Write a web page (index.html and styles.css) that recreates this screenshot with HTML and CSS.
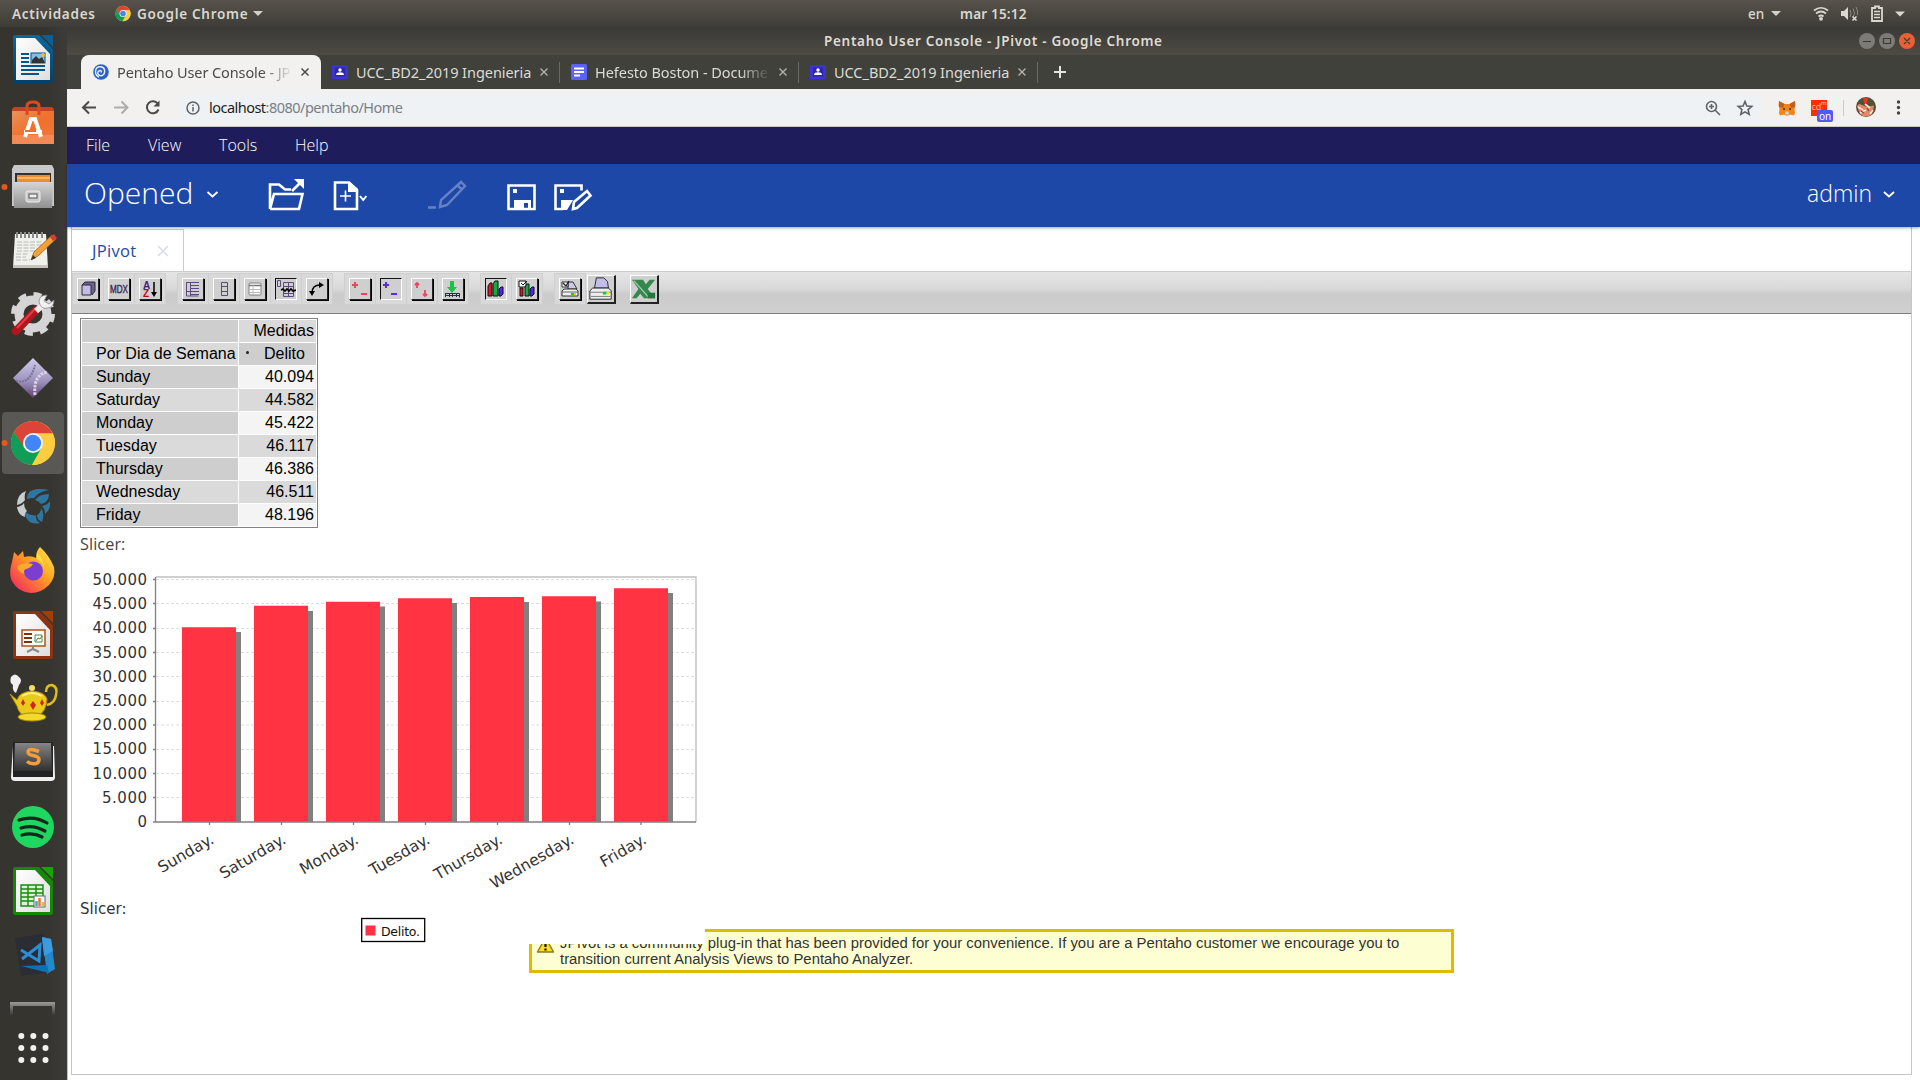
FILE: index.html
```html
<!DOCTYPE html>
<html lang="es">
<head>
<meta charset="utf-8">
<title>Pentaho User Console - JPivot</title>
<link rel="stylesheet" href="styles.css">
</head>
<body>
<svg class="defs" width="0" height="0">
  <defs>
    <symbol id="chrome-logo" viewBox="0 0 48 48">
      <circle cx="24" cy="24" r="23" fill="#ffcd40"/>
      <path d="M4 12.500A23 23 0 0 1 44.500 14H24L14 29z" fill="#db4437"/>
      <path d="M4 12.500A23 23 0 0 0 23 47L33 29.500 24 34 15 29z" fill="#0f9d58"/>
      <path d="M24 14h20.500A23 23 0 0 1 23 47l10-18z" fill="#ffcd40"/>
      <circle cx="24" cy="24" r="10.500" fill="#f5f5f5"/><circle cx="24" cy="24" r="8.500" fill="#4285f4"/>
    </symbol>
    <symbol id="classroom" viewBox="0 0 16 16">
      <rect width="16" height="14" y="1" fill="#3d34cf"/><rect x="3" y="3.500" width="10" height="9" fill="#2d27a5"/>
      <circle cx="8" cy="6" r="1.700" fill="#fff"/><path d="M4 11c0-2 2-2.700 4-2.700s4 .7 4 2.700z" fill="#fff"/>
    </symbol>
    <linearGradient id="lg-page" x1="0" y1="0" x2="1" y2="1"><stop offset="0" stop-color="#fff"/><stop offset="1" stop-color="#dedede"/></linearGradient>
    <linearGradient id="lg-writer" x1="0" y1="0" x2="0" y2="1"><stop offset="0" stop-color="#0369a3"/><stop offset="1" stop-color="#054068"/></linearGradient>
    <linearGradient id="lg-bag" x1="0" y1="0" x2="1" y2="1"><stop offset="0" stop-color="#e9925a"/><stop offset=".5" stop-color="#f0702c"/><stop offset="1" stop-color="#f07a40"/></linearGradient>
    <linearGradient id="lg-metal" x1="0" y1="0" x2="0" y2="1"><stop offset="0" stop-color="#d5d5d5"/><stop offset="1" stop-color="#909090"/></linearGradient>
    <linearGradient id="lg-diamond" x1="0" y1="0" x2="0" y2="1"><stop offset="0" stop-color="#cfcdea"/><stop offset=".6" stop-color="#9c8fbb"/><stop offset="1" stop-color="#5b4270"/></linearGradient>
    <linearGradient id="lg-fox" x1="1" y1="0" x2="0" y2="1"><stop offset="0" stop-color="#fff44f"/><stop offset=".45" stop-color="#ff9a1f"/><stop offset="1" stop-color="#f5156c"/></linearGradient>
    <linearGradient id="lg-key" x1="0" y1="0" x2="0" y2="1"><stop offset="0" stop-color="#858585"/><stop offset="1" stop-color="#303030"/></linearGradient>
    <linearGradient id="lg-fade" x1="0" y1="0" x2="0" y2="1"><stop offset="0" stop-color="#9b9a96"/><stop offset="1" stop-color="#3b3a36"/></linearGradient>
  </defs>
</svg>

<header class="topbar">
  <span class="activities">Actividades</span>
  <svg class="app-logo" width="16" height="17"><use href="#chrome-logo"/></svg>
  <span class="app-name">Google Chrome</span>
  <i class="caret"></i>
  <span class="clock">mar 15:12</span>
  <span class="lang">en</span><i class="caret"></i>
  <svg class="tray" width="96" height="20" viewBox="0 0 96 20" fill="none" stroke="#dad7d0">
    <path d="M1 6.500q7-5.500 14 0M3 9.500q5-4 10 0M5.500 12.500q2.500-2 5 0" stroke-width="1.700"/><circle cx="8" cy="14.800" r="1.900" fill="#dad7d0" stroke="none"/>
    <path d="M28 7h3l4-4v13l-4-4h-3z" fill="#dad7d0" stroke="none"/><path d="M37 6q2 3.500 0 7M40 4.500q3 5 0 9M43 3q2 3 1.500 8" stroke="#8c8a83"/><path d="M39.500 12.500l4 4m0-4l-4 4" stroke-width="1.700"/>
    <path d="M59 4h3V2.500h4V4h3v13H59z" stroke-width="1.800"/><path d="M61 7.500h6M61 10.500h6M61 13.500h6" stroke-width="1.600"/>
    <path d="M82 7.500h10l-5 5z" fill="#dad7d0" stroke="none"/>
  </svg>
</header>

<div class="desktop">
<nav class="dock">
  <svg viewBox="0 27 67 64"><path d="M15 35h24l14 14v32q0 2-2 2H15q-2 0-2-2V37q0-2 2-2z" fill="url(#lg-writer)"/><path d="M41 35h12v12z" fill="#0b5f96"/><path d="M16 38h19l15 16v26H16z" fill="url(#lg-page)"/><path d="M21 54h8M21 58h8M21 62h8M21 66h24M21 70h24M21 74h18" stroke="#04568a" stroke-width="2"/><rect x="31" y="53" width="14" height="10" fill="#80bfe8" stroke="#064f80"/><path d="M32 63v-3l4-4 3 3 3-2 3 6z" fill="#333"/><circle cx="43" cy="55" r="2" fill="#f1bd36"/></svg>
  <svg viewBox="0 91 67 64"><path d="M12 109l2-2h38l2 2v4H12z" fill="#c2451f"/><path d="M12 111h42v33H12z" fill="url(#lg-bag)"/><path d="M12 135h42v9H12z" fill="#f38a55"/><path d="M27 115v-9q0-4 6-4t6 4v9" fill="none" stroke="#db4a1c" stroke-width="3"/><path d="M25 137l6-18h4l6 18M24 132h18" fill="none" stroke="#fff" stroke-width="4"/><path d="M25 131h11" stroke="#ee6c2d" stroke-width="2"/></svg>
  <svg viewBox="0 155 67 64"><circle cx="4.500" cy="187" r="3" fill="#e95420"/><path d="M14 165h38l2 4v37H12v-37z" fill="#c8c8c8"/><path d="M15 173h36v10H15z" fill="#3a3026"/><path d="M17 175h33v7H17z" fill="#f08c30"/><path d="M17 178h33" stroke="#ffe0a0"/><path d="M13 182h40l-1 26H14z" fill="url(#lg-metal)"/><rect x="26" y="191" width="14" height="11" rx="2" fill="#c9c9c9" stroke="#eee"/><rect x="29" y="194" width="8" height="4" fill="#eee" stroke="#555"/></svg>
  <svg viewBox="0 219 67 64"><path d="M15 234h31l2 34H13z" fill="#f1f1ec"/><path d="M13 265h35v3H13z" fill="#c5c5bd"/><path d="M17 232v6m4-6v6m4-6v6m4-6v6m4-6v6m4-6v6m5-6v6" stroke="#8b8b8b" stroke-width="2"/><path d="M17 242h26M17 245h25M17 248h20M17 251h22M16 254h12M16 257h10M16 260h14" stroke="#b8b8b8" stroke-dasharray="5 1.500"/><path d="M31 260l3-8 18-17 4 4-18 17z" fill="#f1a13a" stroke="#a35f1c" stroke-width=".8"/><path d="M50 237l4-3 3 4-4 3z" fill="#d93b3b"/><path d="M31 260l2-5 3 3z" fill="#333"/></svg>
  <svg viewBox="0 283 67 64"><circle cx="33" cy="314" r="14" fill="none" stroke="#d5d5d5" stroke-width="9"/><circle cx="33" cy="314" r="19.500" fill="none" stroke="#d5d5d5" stroke-width="5" stroke-dasharray="8 7.300"/><path d="M16 331l20-21" stroke="#b4141d" stroke-width="8" stroke-linecap="round"/><path d="M17 328l18-19" stroke="#e04149" stroke-width="2"/><path d="M36 311l7-6" stroke="#eee" stroke-width="6"/><path d="M47 295q-8 0-8 7 2 8 9 6 6-1 6-8l-5 4-5-3z" fill="#f0f0f0" stroke="#888" stroke-width=".8"/></svg>
  <svg viewBox="0 347 67 64"><path d="M33 358l20 20-20 20-20-20z" fill="url(#lg-diamond)"/><path d="M16 381q14 4 19-16" stroke="#77709b" stroke-width="2" fill="none" stroke-dasharray="2 1"/><path d="M35 395q-2-21 13-23" stroke="#ddd3e8" stroke-width="3" fill="none" stroke-dasharray="2.500 1.200"/></svg>
  <svg viewBox="0 411 67 64"><rect x="2" y="412" width="62" height="62" rx="4" fill="#595854"/><circle cx="4.500" cy="443" r="3" fill="#e95420"/><svg x="10" y="420" width="46" height="46"><use href="#chrome-logo"/></svg></svg>
  <svg viewBox="0 475 67 64"><g fill="#2e769f"><path d="M27 499q0-10 12-10 6 0 10 1-11 2-15 8-4 0-7 1z"/><path d="M35 500q4-6 14-6 0 8-8 10-2-3-6-4z"/><path d="M42 506q6-1 8-5 1 9-5 13 0-5-3-8z"/><path d="M41 508q4 6 1 14-5-2-5-7 4-2 4-7z"/><path d="M33 515q3 1 3 0-1 5 4 8-9 2-13-4-3-4-2-8 3 4 8 4z"/></g><path d="M26 491q-9 3-9 14 5-1 8-5-1-5 1-9zM17 507q5-1 7-4 0 5 3 8-3 2-2 6-7-2-8-10z" fill="#c9cdd0"/></svg>
  <svg viewBox="0 539 67 64"><path d="M12 562l2-10 4 4 5-5 1 6q7-2 12 1 0-7 4-11 9 8 14 20 2 10-5 18-8 8-18 8-14-1-20-14-2-8 1-17z" fill="url(#lg-fox)"/><circle cx="33.500" cy="571" r="9.500" fill="#7a3ed1"/><path d="M17 566q8-4 16-2-2 4-7 5-3 1-2 5-6-2-7-8z" fill="#ffa932"/><path d="M37 559q7 4 7 10 0-10-7-16z" fill="#ffe443"/></svg>
  <svg viewBox="0 603 67 64"><path d="M15 611h24l14 14v32q0 2-2 2H15q-2 0-2-2V613q0-2 2-2z" fill="#8b3312"/><path d="M41 611h12v12z" fill="#a33e03"/><path d="M16 614h19l15 16v26H16z" fill="url(#lg-page)"/><rect x="22" y="630" width="23" height="16" fill="#fff" stroke="#b5501b" stroke-width="1.500"/><path d="M24 634h8m-8 4h8m-8 4h8" stroke="#7d3110" stroke-width="2"/><path d="M35 635h7v7h-7zM36 641l2-3 2 1 2-3" fill="none" stroke="#4b8a3e"/><path d="M33 646v3l-6 3m6-3l6 3" stroke="#888" stroke-width="2" fill="none"/></svg>
  <svg viewBox="0 667 67 64"><path d="M11 677q4-5 8 0 4 3 0 8l-3 8q-4-2-3-8-4-3-2-8z" fill="#f0f0f0"/><path d="M10 694l7 6q2-8 15-9 13 1 15 8-1 14-10 17v4H25v-4q-6-2-8-10z" fill="#eacb19" stroke="#b38c08"/><path d="M46 692q0-7 6-7 6 2 4 10-1 8-9 10" fill="none" stroke="#e1bd18" stroke-width="2.500"/><circle cx="32" cy="688" r="3" fill="#f5e060"/><ellipse cx="32" cy="717" rx="14" ry="4" fill="#f3d92b" stroke="#a88706"/><path d="M23 699l2 4-2 3-2-3zM33 701l3 4-3 5-3-5zM42 699l2 4-2 3-2-3z" fill="#d6211e"/><path d="M22 696q10-6 20 0" stroke="#fff27e" fill="none" stroke-width="2"/></svg>
  <svg viewBox="0 731 67 64"><path d="M13 746h41l1 31q0 4-4 4H15q-4 0-4-4z" fill="#efefef"/><path d="M15 742h36q2 0 2 3v32H13v-32q0-3 2-3z" fill="#222"/><path d="M15 743h36l1 28H14z" fill="url(#lg-key)"/><path d="M39 751.500q-11-4-11 .5c0 5 11 2 11 7.500 0 6-9 4.500-12 2" fill="none" stroke="#f89b3a" stroke-width="3.500"/></svg>
  <svg viewBox="0 795 67 64"><circle cx="33" cy="827" r="21" fill="#1fd760"/><path d="M19 820q15-5 28 3M21 828q12-4 24 3M22 835q11-3 20 2" fill="none" stroke="#14271b" stroke-width="3.200" stroke-linecap="round"/></svg>
  <svg viewBox="0 859 67 64"><path d="M15 867h24l14 14v32q0 2-2 2H15q-2 0-2-2V869q0-2 2-2z" fill="#148706"/><path d="M41 867h12v12z" fill="#18a303"/><path d="M16 870h19l15 16v26H16z" fill="url(#lg-page)"/><path d="M21 885h22v21H21zM21 889h22M21 893h22M21 897h22M21 901h22M28 885v21M36 885v21" fill="#d9f5d4" stroke="#198a10" stroke-width="1.400"/><rect x="34" y="896" width="11" height="11" fill="#fff" stroke="#666"/><path d="M36.500 906v-5" stroke="#3ba7e0" stroke-width="2.500"/><path d="M39.500 906v-8" stroke="#e8772a" stroke-width="2.500"/><path d="M43 906v-4" stroke="#e7b93b" stroke-width="2.500"/></svg>
  <svg viewBox="0 923 67 64"><path d="M15 938l28-4 9 38-31 4z" fill="#2b2d35"/><path d="M42 937l9 2 4 30-8 5z" fill="#2489ca"/><path d="M42 937l9 2 2 12-9 5z" fill="#3c9be0"/><path d="M21 966l26-1 2 8z" fill="#1070b3"/><path d="M21 950l18 11 1-16-18 14" fill="none" stroke="#2b8dd3" stroke-width="3"/></svg>
  <svg class="cut" viewBox="0 987 67 30"><path d="M10 1002h45v13h-3v-9H13v9h-3z" fill="url(#lg-fade)"/></svg>
  <svg class="apps" viewBox="0 1017 67 63" fill="#f2f1ee"><g id="dots"><circle cx="21.300" cy="1036" r="3"/><circle cx="33.300" cy="1036" r="3"/><circle cx="45.500" cy="1036" r="3"/></g><use href="#dots" y="12"/><use href="#dots" y="24"/></svg>
</nav>

<main class="window">
  <div class="titlebar"><span class="wtitle">Pentaho User Console - JPivot - Google Chrome</span>
    <svg class="wbtns" width="60" height="20" viewBox="0 0 60 20"><circle cx="10" cy="10" r="8" fill="#7d7b75"/><circle cx="30" cy="10" r="8" fill="#7d7b75"/><circle cx="50" cy="10" r="8" fill="#ea5f34"/><path d="M6 10.500h8M26.500 7.500h7v5h-7zM47 7l6 6m0-6l-6 6" stroke="#3b3a36" stroke-width="1.200" fill="none"/></svg>
  </div>
  <div class="tabs">
    <div class="tab active"><svg class="fav" width="16" height="18" viewBox="0 0 16 18" fill="none"><circle cx="8" cy="9" r="7.800" fill="#2b62c4"/><path d="M8 9.500q1-2-1-2-3 1-2 3.500 3 3.500 6 0 2-5-2-7-6-1.500-6.500 4.500 0 4 3.500 5.500" stroke="#e9f0fc" stroke-width="1.400"/></svg><span class="tt t1">Pentaho User Console - JP</span><svg class="x" width="10" height="10"><path d="M1.500 1.500l7 7m0-7l-7 7" stroke="#4a4a46" stroke-width="1.500"/></svg></div>
    <div class="tab"><svg class="fav" width="16" height="16"><use href="#classroom"/></svg><span class="tt t2">UCC_BD2_2019 Ingenieria</span><svg class="x" width="10" height="10"><path d="M1.500 1.500l7 7m0-7l-7 7" stroke="#b3b2ac" stroke-width="1.400"/></svg></div>
    <div class="tab sep"><svg class="fav" width="16" height="16"><rect width="16" height="16" rx="1.500" fill="#5a63f3"/><path d="M3 4.500h10M3 8h10M3 11.500h6" stroke="#fff" stroke-width="1.800"/></svg><span class="tt t3">Hefesto Boston - Docume</span><svg class="x" width="10" height="10"><path d="M1.500 1.500l7 7m0-7l-7 7" stroke="#b3b2ac" stroke-width="1.400"/></svg></div>
    <div class="tab sep"><svg class="fav" width="16" height="16"><use href="#classroom"/></svg><span class="tt t2">UCC_BD2_2019 Ingenieria</span><svg class="x" width="10" height="10"><path d="M1.500 1.500l7 7m0-7l-7 7" stroke="#b3b2ac" stroke-width="1.400"/></svg></div>
    <div class="newtab"><svg width="14" height="14"><path d="M7 1v12M1 7h12" stroke="#e6e5e1" stroke-width="2"/></svg></div>
  </div>
  <div class="navbar">
    <svg width="110" height="36" viewBox="67 90 110 36" fill="none" stroke-width="2"><path d="M96 107.500H83.500M89 101.500l-6 6 6 6" stroke="#4a4a4a"/><path d="M114 107.500h13M121.500 101.500l6 6-6 6" stroke="#aeadab"/><path d="M158 104a6 6 0 1 0 .5 5.500" stroke="#4a4a4a"/><path d="M159.500 100.500v6h-6z" fill="#4a4a4a"/></svg>
    <div class="omni">
      <svg width="14" height="14" fill="none" stroke="#5f6368" stroke-width="1.500"><circle cx="7" cy="7" r="6"/><path d="M7 6v4.500M7 3.500v1.500"/></svg>
      <span class="url"><b>localhost</b>:8080/pentaho/Home</span>
      <svg class="omni-r" width="54" height="20" viewBox="1702 98 54 20" fill="none" stroke="#5f6368" stroke-width="1.600"><circle cx="1711.500" cy="106.500" r="5"/><path d="M1715 110l5 5M1709 106.500h5M1711.500 104v5"/><path d="M1745 101.500l1.900 4.500 4.900.4-3.700 3.200 1.100 4.800-4.200-2.500-4.200 2.500 1.100-4.800-3.700-3.200 4.900-.4z"/></svg>
    </div>
    <svg width="157" height="36" viewBox="1763 90 157 36"><path d="M1779 101l5.500 3h5l5.500-3 .5 4-1 4 .5 4-1 2.500-4-1-1.500 1h-3l-1.500-1-4 1-1-2.500.5-4-1-4z" fill="#f0851b"/><path d="M1785.500 111.500h3l.5 3h-4z" fill="#d9cfc6"/><path d="M1779 101l5.500 3-1.500 4-4-1zM1795 101l-5.500 3 1.500 4 4-1z" fill="#bd6020"/><path d="M1783 109h2m4 0h2" stroke="#333" stroke-width="1.300"/><rect x="1811" y="100" width="16" height="16" fill="#fb3007"/><text x="1811.500" y="110" font-family="Noto Sans" font-size="9" fill="#ffae91">cd</text><text x="1821" y="105" font-family="Noto Sans" font-size="6" fill="#ffd5c6">m</text><rect x="1817" y="110" width="16" height="12" rx="2" fill="#5459f2"/><text x="1819" y="120" font-family="Noto Sans" font-size="10" fill="#fff">on</text><path d="M1843.500 100v16" stroke="#c9c9c7"/><circle cx="1866" cy="107" r="10" fill="#5c4b38"/><path d="M1857 106q8-8 17 0l-2 8q-6 5-12 0z" fill="#e0886c"/><path d="M1857 103q4-5 9-2l6-1 3 5-8 2z" fill="#4b5636"/><path d="M1863 98h5l-1 5h-3z" fill="#e8381c"/><path d="M1858 107l5 3m2-6l5 4m-10 5l6-3m4 4l3-4" stroke="#fbe3cc" stroke-width="1.700"/><path d="M1861 111l3 2m3-5l2 3" stroke="#8e3f2c" stroke-width="1.200"/><circle cx="1898.500" cy="102" r="1.700" fill="#454545"/><circle cx="1898.500" cy="107.500" r="1.700" fill="#454545"/><circle cx="1898.500" cy="113" r="1.700" fill="#454545"/></svg>
  </div>

  <div class="menubar"><span class="m1">File</span><span class="m2">View</span><span class="m3">Tools</span><span>Help</span></div>
  <div class="bluebar">
    <span class="opened">Opened</span>
    <svg width="400" height="63" viewBox="200 164 400 63" fill="none" stroke="#fff" stroke-width="2.600">
      <path d="M207.500 192l5 4.500 5-4.500" stroke-width="1.800"/>
      <path d="M270 209v-24.500h9l6 5h6M270 209h29l3.500-15H274l-4 15M292 191l9-9"/><path d="M294 179h10v10z" fill="#fff" stroke="none"/>
      <path d="M335 182.500h14l8 7.500v19h-22z"/><path d="M348 182h2l8 7v3h-10z" fill="#fff" stroke="none"/><path d="M345.500 190.500v11M340 196h11" stroke-width="1.600"/><path d="M360 196l3.200 4 3.200-4" stroke-width="2"/>
      <g stroke="#6681c5" stroke-width="2.400"><path d="M428 207.500h8M440 207l1-7 20-18 4 4-18 19zM457 185l5 4.500"/></g>
      <path d="M508.500 185.500h26v23.500h-26z"/><path d="M514 200h17v9h-3v-6h-4v6h-10zM513 189h4v4h-4z" fill="#fff" stroke="none"/>
      <path d="M563 209h-7.500v-23.500h26v5"/><path d="M573 209l1-7 13-11 3.500 4.500L577 208z"/><path d="M560 189h4v4h-4zM561 200h12l-6 10h-6z" fill="#fff" stroke="none"/>
    </svg>
    <span class="admin">admin</span>
    <svg class="achev" width="14" height="10"><path d="M2 2l5 4.500L12 2" stroke="#fff" stroke-width="1.800" fill="none"/></svg>
  </div>

  <div class="workspace">
    <div class="panel">
      <div class="ptabs"><div class="ptab"><span>JPivot</span><svg width="12" height="12"><path d="M1 1l10 10m0-10L1 11" stroke="#d5daee" stroke-width="1.500"/></svg></div></div>
      <div class="toolbar">
        <i class="tb"><svg viewBox="0 0 20 20"><path d="M4 6l3-3h10v9l-3 4" fill="#6a628a" stroke="#2e2a3c"/><path d="M4 6h9v10H4z" fill="#c4bce8" stroke="#2e2a3c"/></svg></i>
        <i class="tb"><svg viewBox="0 0 20 20"><text x="1" y="14" textLength="18" lengthAdjust="spacingAndGlyphs" font-size="11" font-family="Liberation Sans" fill="#3b2452" stroke="#3b2452" stroke-width=".4">MDX</text></svg></i>
        <i class="tb"><svg viewBox="0 0 20 20" font-family="Liberation Sans" font-weight="bold" font-size="10"><text x="3" y="9.500" fill="#41217c">A</text><text x="3" y="18" fill="#b50d1d">Z</text><path d="M14 3v12" stroke="#000" stroke-width="1.500"/><path d="M11 13h6l-3 5z"/></svg></i>
        <i class="tb g"><svg viewBox="0 0 20 20" stroke="#5b4a7d" fill="none"><path d="M3 3.500h13M7 6.500h9M7 9.500h9M3 12.500h13M7 15.500h9M3.500 3v14h12M7.500 3v14"/></svg></i>
        <i class="tb"><svg viewBox="0 0 20 20" stroke="#5b4a7d" fill="none"><path d="M7.500 3.500h6v13h-6zM7 7.500h6M7 12.500h6"/></svg></i>
        <i class="tb"><svg viewBox="0 0 20 20"><rect x="4" y="4" width="12" height="12" rx="1" fill="#fff" stroke="#827f84"/><path d="M4 6.500h12" stroke="#777" stroke-width="1.500"/><path d="M4 10.500h12M4 13.500h12M8 6v10" stroke="#bbb"/></svg></i>
        <i class="tb in"><svg viewBox="0 0 20 20" stroke="#5b4a7d" fill="none"><path d="M1.500 1.500h3v6h-3zM7.500 3.500h10v14h-10zM7 7.500h11M7 14.500h11M12.500 3v15"/><path d="M5 11l2-1 2 2 2-2 2 2 2-2 2 2 3-1" stroke="#000" stroke-width="1.700"/></svg></i>
        <i class="tb"><svg viewBox="0 0 20 20"><path d="M5 14q0-8 8-8" fill="none" stroke="#000" stroke-width="1.500"/><path d="M12 3l5 3-5 3zM2 12h6l-3 5z"/></svg></i>
        <i class="tb g"><svg viewBox="0 0 20 20" stroke="#ee4459" stroke-width="2"><path d="M2 6h6M5 3v6M11 15h6"/></svg></i>
        <i class="tb in"><svg viewBox="0 0 20 20" stroke="#5a2fe0" stroke-width="2"><path d="M2 6h6M5 3v6M10 15h6"/></svg></i>
        <i class="tb"><svg viewBox="0 0 20 20" stroke="#ee4459" stroke-width="1.800" fill="none"><path d="M5 9V4M3 6l2-2 2 2M13 11v6M11 15l2 2 2-2"/></svg></i>
        <i class="tb"><svg viewBox="0 0 20 20"><path d="M7 2h4v6h3l-5 6-5-6h3z" fill="#18c541"/><path d="M2.500 14.500h14v4M2.500 14v4M6.500 14v4m3-4v4m4-4v4M2 16.500h14" stroke="#234" fill="none"/></svg></i>
        <i class="tb g in"><svg viewBox="0 0 20 20" stroke="#111"><path d="M2 7l2-3h2v13H2z" fill="#e01526"/><path d="M7 5l2-3h3v15H7z" fill="#11ad3d"/><path d="M13 10l2-2h2v7l-2 2h-2z" fill="#5423ee"/></svg></i>
        <i class="tb"><svg viewBox="0 0 20 20" stroke="#111"><path d="M2 2h7v6H2z" fill="#fff"/><path d="M4 4l2 2 4-4" fill="none"/><path d="M3 9h3v8H3z" fill="#e01526"/><path d="M8 8l2-3h2v12H8z" fill="#11ad3d"/><path d="M13 10l2-2h2v7l-2 2h-2z" fill="#5423ee"/></svg></i>
        <i class="tb g"><svg viewBox="0 0 20 20" stroke="#222" stroke-width=".9"><path d="M8 10V3h5l4 7z" fill="#cfc8ed"/><path d="M2 3h6v5H2z" fill="#fff"/><path d="M3 4l3 3 3-5" fill="none" stroke-width="1.300"/><path d="M2 12l2-2h12l2 2v5H2z" fill="#eee"/><path d="M2 13h16" stroke="#555"/><path d="M11 15h3" stroke="#11cc41" stroke-width="2"/><path d="M14 15h2" stroke="#f4c51a" stroke-width="2"/></svg></i>
        <i class="tb big"><svg viewBox="0 0 28 28" stroke="#222"><path d="M7 13l2-11h8l4 4 1 7z" fill="#c3bdea"/><path d="M2 16l3-3h17l3 3v9H2z" fill="#eee"/><path d="M2 17.500h23M3 22h21" stroke="#777"/><path d="M16 18.500h4" stroke="#11cc41" stroke-width="3"/><path d="M20 18.500h3" stroke="#f4e51a" stroke-width="3"/></svg></i>
        <i class="tb big xl"><svg viewBox="0 0 28 28"><path d="M1 4h12l3 5 4-5h6l-8 10 8 10H14l-4-5-4 5H1l7-10z" fill="#35884d"/><path d="M3 5l16 18" stroke="#a7c9ae" stroke-width="1.500"/><path d="M18 18h8v6h-8z" fill="#2b7540"/></svg></i>
      </div>

      <div class="content">
        <table class="pivot">
          <tr><th></th><th class="r b">Medidas</th></tr>
          <tr><th class="b">Por Dia de Semana</th><th class="m"><i></i>Delito</th></tr>
          <tr><th>Sunday</th><td>40.094</td></tr>
          <tr><th class="b">Saturday</th><td class="b">44.582</td></tr>
          <tr><th>Monday</th><td>45.422</td></tr>
          <tr><th class="b">Tuesday</th><td class="b">46.117</td></tr>
          <tr><th>Thursday</th><td>46.386</td></tr>
          <tr><th class="b">Wednesday</th><td class="b">46.511</td></tr>
          <tr><th>Friday</th><td>48.196</td></tr>
        </table>
        <p class="slicer">Slicer:</p>
        <svg class="chart" width="625" height="375" viewBox="80 569 625 375" font-family="DejaVu Sans" font-size="15" fill="#333">
          <rect x="80" y="569" width="625" height="375" fill="#fff"/>
          <g stroke="#dedede" stroke-width="1" stroke-dasharray="3 2"><path d="M156 579.500h539M156 603.500h539M156 628.500h539M156 652.500h539M156 676.500h539M156 701.500h539M156 725h539M156 749.500h539M156 773.500h539M156 797.500h539"/></g>
          <g fill="#808080"><path d="M187 632h54v190h-54zM259 611h54v211h-54zM331 606.500h54V822h-54zM403 603h54v219h-54zM475 602h54v220h-54zM547 601.500h54V822h-54zM619 593h54v229h-54z"/></g>
          <g fill="#ff3341"><path d="M182 627.300h54V822h-54zM254 605.700h54V822h-54zM326 601.700h54V822h-54zM398 598.300h54V822h-54zM470 597h54v225h-54zM542 596.300h54V822h-54zM614 588.200h54V822h-54z"/></g>
          <path d="M156 577h540v245" fill="none" stroke="#c0c0c0" stroke-width="1.400"/>
          <path d="M155.500 577v245H696M153 579.500h2M153 603.500h2M153 628.500h2M153 652.500h2M153 676.500h2M153 701.500h2M153 725h2M153 749.500h2M153 773.500h2M153 797.500h2M153 822h2M209.500 822v3M281.500 822v3M353.500 822v3M425.500 822v3M497.500 822v3M569.500 822v3M641 822v3" fill="none" stroke="#808080" stroke-width="1.300"/>
          <g text-anchor="end"><text x="147" y="585" textLength="54.500">50.000</text><text x="147" y="609" textLength="54.500">45.000</text><text x="147" y="633" textLength="54.500">40.000</text><text x="147" y="657.500" textLength="54.500">35.000</text><text x="147" y="681.500" textLength="54.500">30.000</text><text x="147" y="705.500" textLength="54.500">25.000</text><text x="147" y="730" textLength="54.500">20.000</text><text x="147" y="754" textLength="54.500">15.000</text><text x="147" y="778.500" textLength="54.500">10.000</text><text x="147" y="802.500" textLength="45">5.000</text><text x="147" y="826.500">0</text>
          <g font-size="15.700"><text transform="translate(215 842.500) rotate(-30)">Sunday.</text><text transform="translate(287 842.500) rotate(-30)">Saturday.</text><text transform="translate(359.500 842.500) rotate(-30)">Monday.</text><text transform="translate(431 842.500) rotate(-30)">Tuesday.</text><text transform="translate(503.500 842.500) rotate(-30)">Thursday.</text><text transform="translate(575 842.500) rotate(-30)">Wednesday.</text><text transform="translate(647.500 842.500) rotate(-30)">Friday.</text></g></g>
          <text x="80" y="914" textLength="46.500">Slicer:</text>
          <rect x="361.700" y="918.500" width="63" height="23" fill="#fff" stroke="#000" stroke-width="1.300"/><rect x="365.500" y="925.500" width="10" height="10" fill="#ff3341"/>
          <text x="381" y="935.500" font-size="12.500" textLength="39" fill="#111">Delito.</text>
        </svg>
        <div class="warn"><svg width="19" height="18" viewBox="0 0 19 18"><path d="M9.500 1.500l8 14.500H1.500z" fill="#fbdf27" stroke="#8f7a25" stroke-width="1.500" stroke-linejoin="round"/><path d="M9.500 5v6M9.500 12.500v2" stroke="#111" stroke-width="2.200"/></svg><p>JPivot is a community plug-in that has been provided for your convenience. If you are a Pentaho customer we encourage you to transition current Analysis Views to Pentaho Analyzer.</p></div>
      </div>
    </div>
  </div>
</main>
</div>
</body>
</html>
```
FILE: styles.css
```css
* { box-sizing: border-box; }
html, body { margin: 0; height: 1080px; overflow: hidden; background: #35342f; font-family: "Noto Sans", sans-serif; }
body { display: flex; flex-direction: column; }
svg { display: block; flex: none; }
.defs { position: absolute; }
span { white-space: nowrap; }

.topbar { height: 27px; flex: none; display: flex; align-items: center; background: linear-gradient(#57534b, #3e3c37); color: #dad7d0; font-size: 13.500px; font-weight: 600; padding-left: 12px; }
.activities { width: 103px; letter-spacing: .72px; }
.app-logo { margin-right: 6px; }
.app-name { width: 116px; letter-spacing: .7px; }
.caret { border: 5px solid transparent; border-top-color: #d3d0ca; border-bottom: 0; }
.clock { margin-left: 697px; width: 788px; letter-spacing: .2px; }
.lang { width: 23px; font-weight: 500; }
.tray { margin-left: 32px; }

.desktop { flex: 1; display: flex; min-height: 0; }
.dock { width: 67px; flex: none; background: linear-gradient(90deg, #35342f 70%, #3d3b37); }
.dock svg { width: 67px; height: 64px; }
.dock svg svg { width: 46px; height: 46px; }
.dock .cut { height: 30px; }
.dock .apps { height: 63px; }

.window { flex: 1; display: flex; flex-direction: column; background: #fff; min-width: 0; }
.titlebar { height: 28px; flex: none; background: linear-gradient(#3a3935, #4e4b44); display: flex; align-items: center; justify-content: flex-end; color: #dedbd4; font-size: 13.500px; font-weight: 600; }
.wtitle { width: 341px; margin-right: 692px; letter-spacing: .7px; }
.wbtns { margin-right: 3px; }

.tabs { height: 34px; flex: none; background: #41413c; display: flex; padding-left: 14px; }
.tab { width: 239px; display: flex; align-items: center; padding: 0 0 1px 12px; color: #dcdbd5; font-size: 14.500px; letter-spacing: -.05px; }
.tab.active { width: 240px; margin-right: -1px; background: #f2f1f0; color: #4b4a46; border-radius: 8px 8px 0 0; }
.fav { margin-right: 8px; }
.tt { width: 176px; }
.t1 { letter-spacing: -.1px; }
.t1, .t3 { -webkit-mask-image: linear-gradient(90deg, #000 82%, transparent); mask-image: linear-gradient(90deg, #000 82%, transparent); }
.x { margin-left: 7px; }
.sep { background: linear-gradient(#6b6a65, #6b6a65) 0 50% / 1px 21px no-repeat; }
.newtab { display: flex; align-items: center; padding-left: 16px; background: linear-gradient(#6b6a65, #6b6a65) 0 50% / 1px 21px no-repeat; }

.navbar { height: 38px; flex: none; background: #f2f1f0; border-bottom: 1px solid #c9cac8; display: flex; align-items: center; }
.omni { flex: 1; height: 28px; border-radius: 14px; background: #eef2f4; display: flex; align-items: center; padding: 0 7px 0 9px; }
.url { margin: -1px 0 0 9px; font-size: 14.500px; letter-spacing: -.52px; color: #7b7f84; }
.url b { font-weight: 400; color: #1e1e1e; }
.omni-r { margin-left: auto; }

.menubar { height: 37px; flex: none; background: #1f1c5c; color: #fff; font: 300 16px "Open Sans", sans-serif; display: flex; align-items: center; padding: 0 0 1px 19px; }
.m1 { width: 62px; }
.m2 { width: 71px; }
.m3 { width: 76px; }
.bluebar { height: 63px; flex: none; background: #1d48a8; box-shadow: 0 1px 3px rgba(0,0,0,.35); color: #fff; display: flex; align-items: center; padding-left: 17px; font-family: "Open Sans", sans-serif; font-weight: 300; z-index: 1; }
.opened { font-size: 30px; width: 116px; margin-top: -6px; }
.admin { font-size: 23px; margin: -6px 10px 0 auto; }
.achev { margin: -2px 24px 0 0; }

.workspace { flex: 1; border-left: 1px solid #aac6cf; padding: 0 8px 5px 3px; display: flex; min-height: 0; }
.panel { flex: 1; border: 1px solid #c6c6c6; border-top: 0; display: flex; flex-direction: column; min-width: 0; }
.ptabs { height: 45px; flex: none; border-bottom: 1px solid #ccc; padding-top: 2px; }
.ptab { width: 112px; height: 42px; border: 1px solid #ccc; border-width: 1px 1px 0 0; background: #fff; display: flex; align-items: center; padding: 0 0 0 20px; font: 16.500px "Open Sans", sans-serif; color: #1d48a8; }
.ptab span { width: 65px; letter-spacing: .3px; }
.toolbar { height: 42px; flex: none; background: linear-gradient(#e5e5e5, #d9d9d9 40%, #cbcbcb 55%, #d0d0d0); border-bottom: 1px solid #7e7e7e; display: flex; align-items: flex-start; padding: 6px 0 0 5px; }
.tb { width: 22px; height: 22px; margin-right: 9px; background: #d0cfd0; border: 1px solid; border-color: #fff #222 #222 #fff; box-shadow: 1px 1px 0 #000, 0 0 0 4px #d9d9d9, 0 0 0 5px #cfcfcf; flex: none; font-style: normal; }
.tb svg { width: 20px; height: 20px; }
.tb.g { margin-left: 12px; }
.tb.in { border-color: #111 #fff #fff #111; box-shadow: 0 0 0 4px #d9d9d9, 0 0 0 5px #cfcfcf; }
.tb.big { width: 29px; height: 29px; margin: -3px 14px 0 -3px; border-width: 1px 2px 2px 1px; box-shadow: none; }
.tb.big svg { width: 26px; height: 26px; }
.tb.big.xl { margin-left: 0; }

.content { padding: 4px 0 0 8px; display: flex; flex-direction: column; align-items: flex-start; }
.pivot { border: 1px solid #808080; border-spacing: 1px; font: 16px "Liberation Sans", Arial, sans-serif; color: #000; width: 238px; height: 210px; table-layout: fixed; }
.pivot th, .pivot td { height: 22px; padding: 0 2px 0 14px; line-height: 22px; text-align: left; font-weight: 400; background: #cecece; white-space: nowrap; }
.pivot th:first-child { width: 156px; }
.pivot td { text-align: right; background: #f4f4f4; }
.pivot th.b, .pivot td.b { background: #dadada; }
.pivot th.r { text-align: right; padding-left: 0; }
.pivot th.m { padding-left: 7px; }
.pivot th i { display: inline-block; width: 3px; height: 3px; background: #222; border-radius: 2px; margin: 0 15px 5px 0; }
.slicer { margin: 4px 0 0; height: 37px; font: 16.200px/24px "Open Sans", sans-serif; letter-spacing: .1px; color: #444; }
.chart { position: relative; z-index: 1; }
.chart text { white-space: pre; }
.warn { width: 925px; height: 44px; margin: -15px 0 0 449px; border: 3px solid #ddbc00; background: #fdffd3; display: flex; padding: 3px 30px 0 4px; font: 14.870px/16px "Liberation Sans", Arial, sans-serif; color: #333; }
.warn p { margin: 0; padding-left: 5px; width: 870px; flex: none; }
.warn svg { margin-top: 1px; }
```
